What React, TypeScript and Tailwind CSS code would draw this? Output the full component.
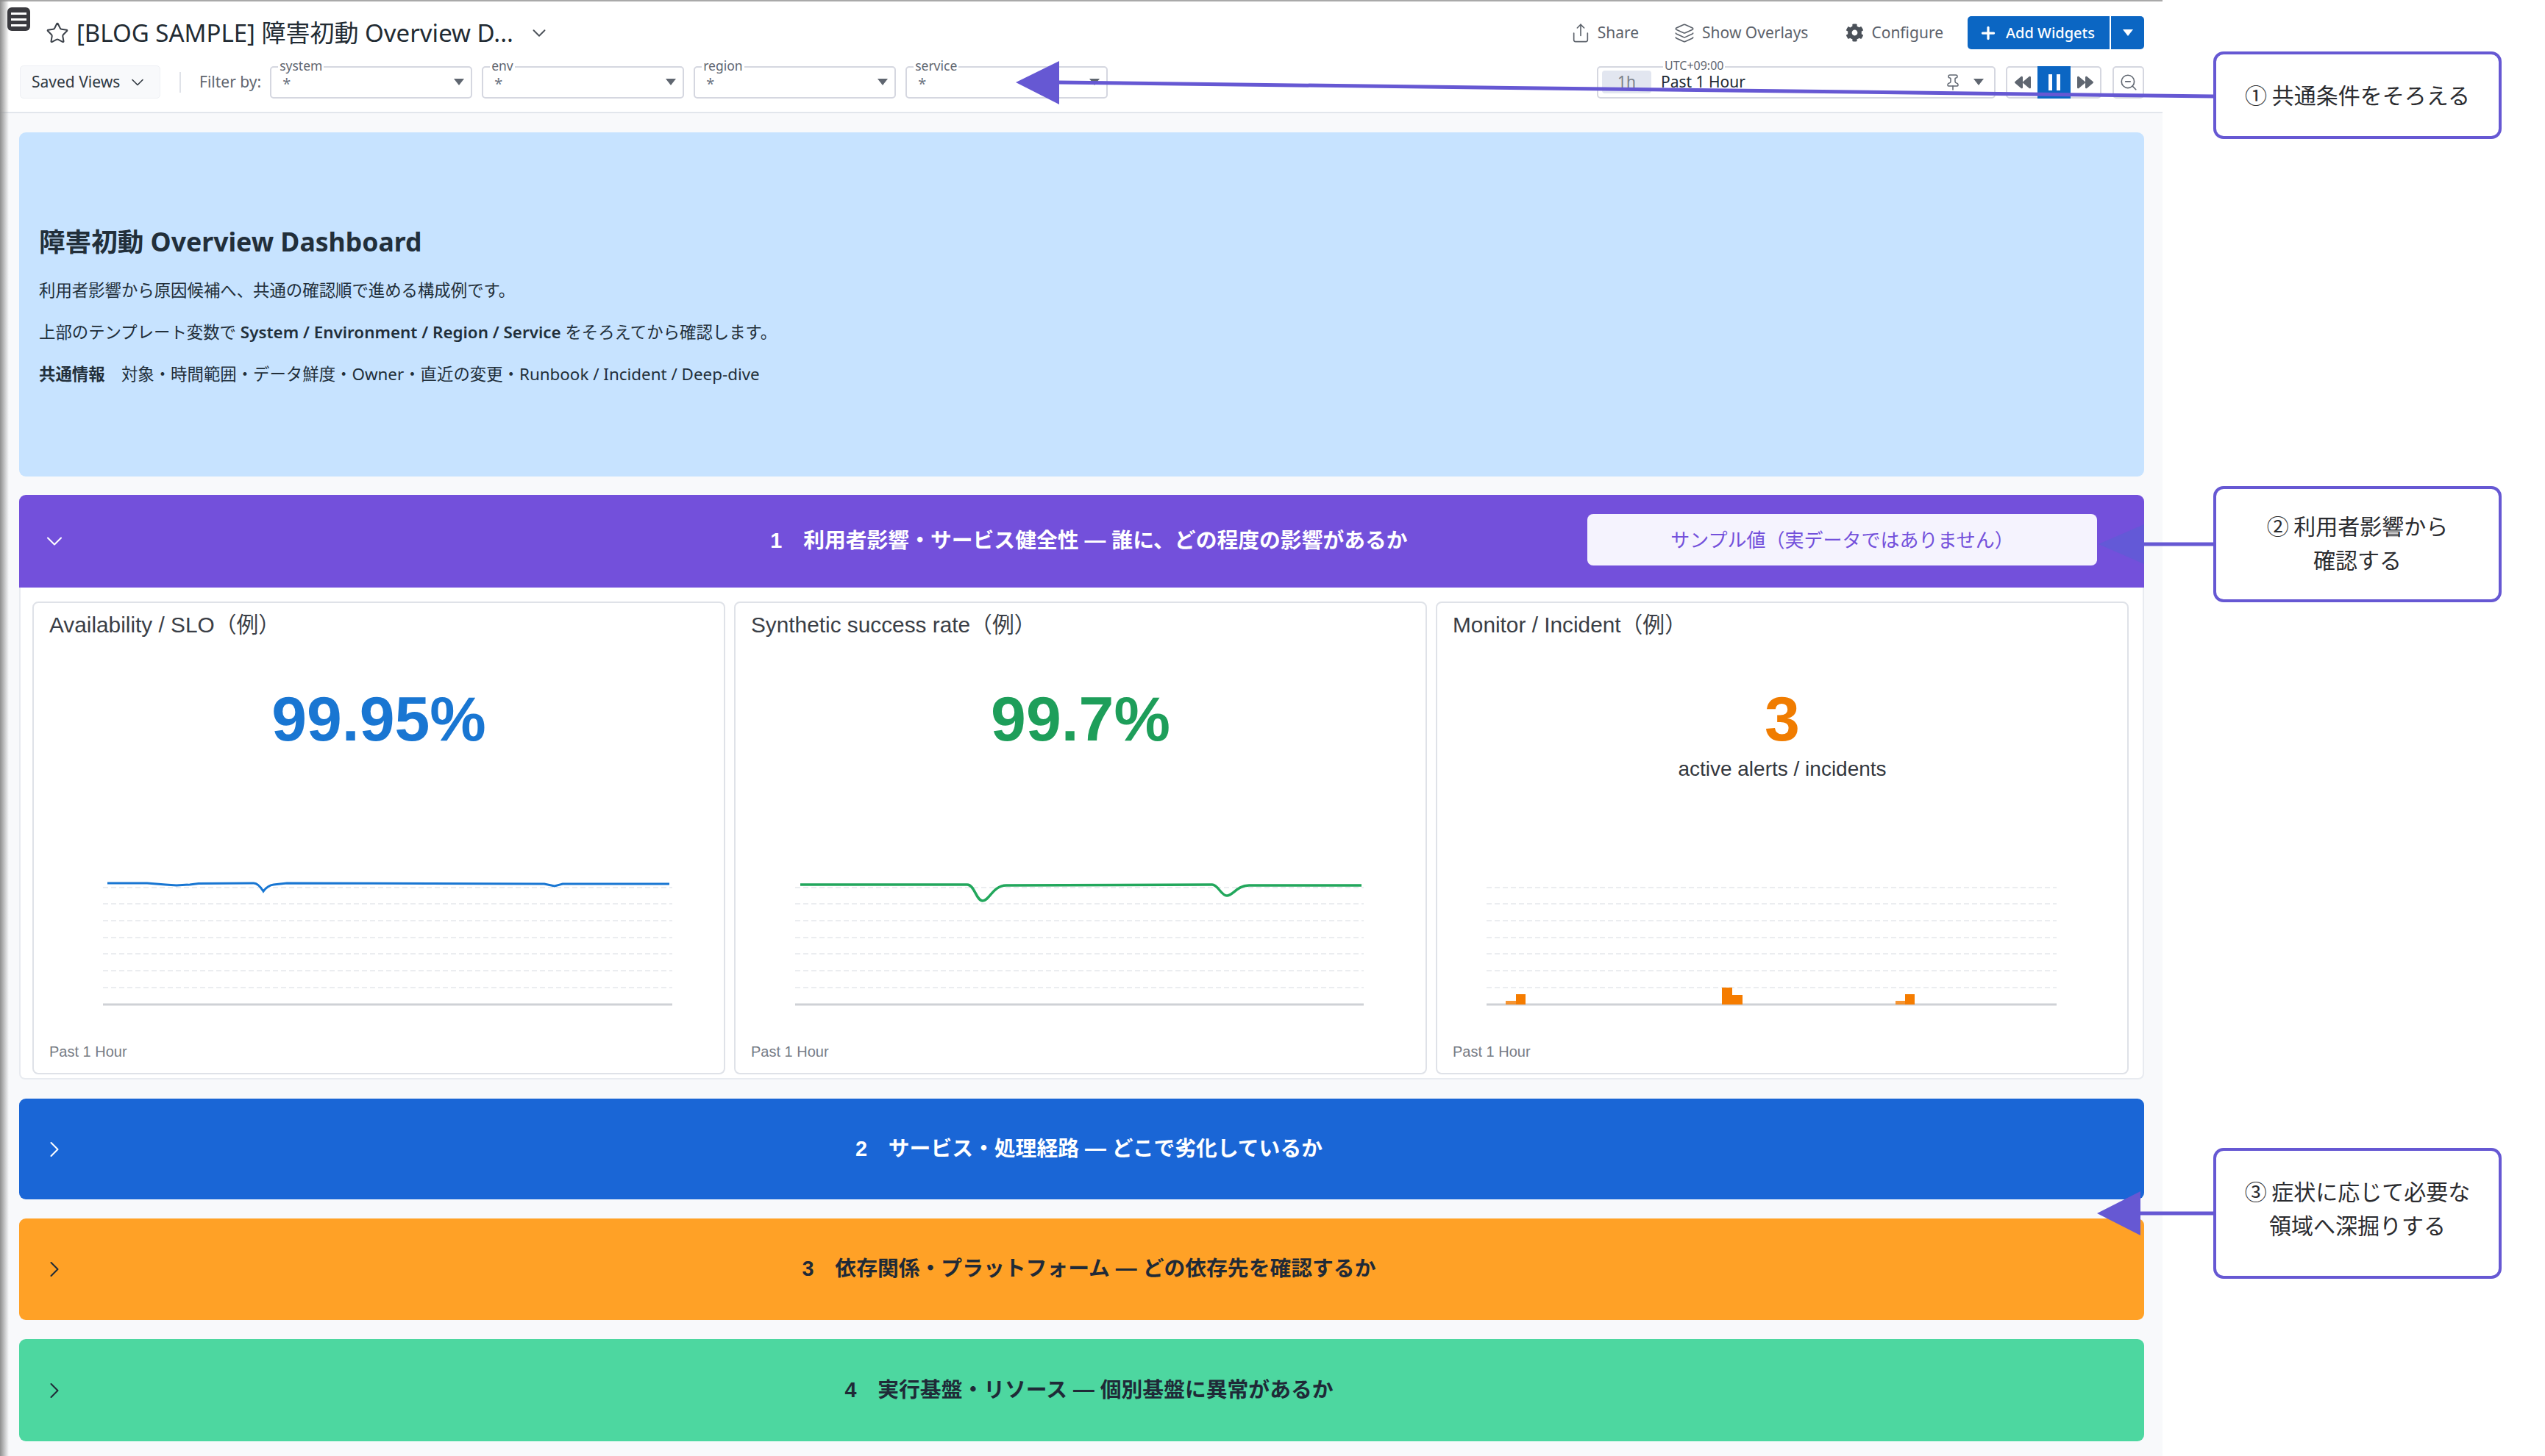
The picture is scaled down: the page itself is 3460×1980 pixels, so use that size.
import { ChevronDown, ChevronRight, Layers, Pin, Plus, Share, Star, ZoomOut } from "lucide-react";
import { FaBackward, FaCog, FaForward } from "react-icons/fa";

const GRID_Y = [39, 61, 84, 107, 129, 152, 175];

const uiFont = "font-['Noto_Sans','Noto_Sans_CJK_JP',sans-serif]";
const widgetFont = "font-['Liberation_Sans','Noto_Sans_CJK_JP',sans-serif]";

const Caret = ({ className }: { className: string }) => (
  <span className={`w-0 h-0 border-x-[7px] border-x-transparent border-t-[9px] ${className}`} />
);

const FilterField = ({ label }: { label: string }) => (
  <div className="relative w-[275px] h-[44px] border-2 border-[#d5d7e0] rounded-[5px] flex items-center justify-between pl-[15px] pr-[9px]">
    <span className="absolute left-[9px] top-[-12px] bg-white px-[2px] text-[17.5px] leading-[18px] text-[#5f6670]">{label}</span>
    <span className="text-[20px] text-[#6b7280] pt-[4px]">*</span>
    <Caret className="border-t-[#5f6670]" />
  </div>
);

const ChartGrid = ({ x1, x2 }: { x1: number; x2: number }) => (
  <>
    {GRID_Y.map((y) => (
      <line key={y} x1={x1} x2={x2} y1={y} y2={y} stroke="#ebedf0" strokeWidth="2" strokeDasharray="7 4" />
    ))}
    <line x1={x1} x2={x2} y1={198} y2={198} stroke="#cfd1d6" strokeWidth="3" />
  </>
);

const Chart = ({ children }: { children: React.ReactNode }) => (
  <svg viewBox="0 0 938 233" className="w-full h-[233px] mt-auto block">
    {children}
  </svg>
);

const Card = ({ title, children }: { title: string; children: React.ReactNode }) => (
  <div className={`w-[942px] h-[643px] bg-white border-2 border-[#dfe2e8] rounded-[8px] flex flex-col ${widgetFont}`}>
    <div className="h-[60px] flex items-center px-[21px] text-[29.8px] text-[#3a3e46]">{title}</div>
    {children}
    <div className="h-[58px] flex items-center px-[21px] text-[20px] text-[#777c85]">Past 1 Hour</div>
  </div>
);

const Value = ({ text, color }: { text: string; color: string }) => (
  <div className={`mt-[54px] text-center font-bold text-[86px] leading-[86px] ${color}`}>{text}</div>
);

const SectionBar = ({ height, color, text, label }: { height: string; color: string; text: string; label: string }) => (
  <div className={`${height} ${color} ${text} rounded-[9px] flex items-center pl-[30px]`}>
    <ChevronRight size={36} strokeWidth={1.4} className="shrink-0 mr-[-46px]" />
    <div className={`flex-1 text-center font-bold text-[28.8px] ${widgetFont}`}>{label}</div>
  </div>
);

const Callout = ({ height, margin, pad, lines }: { height: string; margin: string; pad: string; lines: string[] }) => (
  <div className={`${height} ${margin} ${pad} w-[392px] border-[4px] border-[#6658d3] rounded-[14px] bg-white flex flex-col items-center justify-center text-[30px] leading-[46px] text-[#2b2c30] font-['Noto_Sans_CJK_JP',sans-serif]`}>
    {lines.map((line) => (
      <div key={line}>{line}</div>
    ))}
  </div>
);

export default function App() {
  return (
    <div className={`relative w-[3460px] h-[1980px] overflow-hidden bg-white flex ${uiFont}`}>
      <main className="w-[2940px] h-full bg-[#f8f9fb] flex flex-col border-t-2 border-t-[#a9a9a9]">
        <header className="h-[152px] shrink-0 bg-white border-b-2 border-b-[#e2e6ec]">
          <div className="h-[45px] mt-[20px] flex items-center pl-[62px] pr-[25px]">
            <Star size={32} strokeWidth={1.5} className="text-[#3b4149]" />
            <span className="ml-[10px] text-[33px] text-[#222b33]">[BLOG SAMPLE] 障害初動 Overview D...</span>
            <ChevronDown size={30} strokeWidth={1.5} className="ml-[20px] text-[#4b5159]" />
            <div className="ml-auto flex items-center text-[21px] text-[#5c626b]">
              <Share size={28} strokeWidth={1.4} />
              <span className="ml-[9px]">Share</span>
              <Layers size={28} strokeWidth={1.4} className="ml-[48px]" />
              <span className="ml-[10px]">Show Overlays</span>
              <FaCog size={25} className="ml-[51px] text-[#4b5159]" />
              <span className="ml-[10px]">Configure</span>
              <div className="ml-[33px] w-[240px] h-[45px] bg-[#0b66c3] rounded-[5px] flex items-center text-white font-medium text-[20px]">
                <div className="w-[195px] h-full flex items-center pl-[15px] border-r-2 border-r-white">
                  <Plus size={26} strokeWidth={3} />
                  <span className="ml-[11px]">Add Widgets</span>
                </div>
                <div className="flex-1 flex justify-center">
                  <Caret className="border-t-white" />
                </div>
              </div>
            </div>
          </div>
          <div className="h-[45px] mt-[22px] flex items-center pl-[27px] pr-[25px]">
            <div className="w-[191px] h-[45px] bg-[#f8f9fb] border border-[#eef0f4] rounded-[5px] flex items-center pl-[15px] text-[21px] text-[#303841]">
              Saved Views
              <ChevronDown size={28} strokeWidth={1.4} className="ml-[10px]" />
            </div>
            <div className="w-[2px] h-[28px] bg-[#dfe2e8] ml-[26px]" />
            <span className="ml-[25px] mr-[12px] text-[21px] text-[#5f6670]">Filter by:</span>
            <div className="flex gap-[13px]">
              <FilterField label="system" />
              <FilterField label="env" />
              <FilterField label="region" />
              <FilterField label="service" />
            </div>
            <div className="ml-auto flex items-center">
              <div className="relative w-[542px] h-[44px] border-2 border-[#d5d7e0] rounded-[5px] flex items-center pl-[5px] pr-[14px]">
                <span className="absolute left-[88px] top-[-12px] bg-white px-[2px] text-[16px] leading-[18px] text-[#5f6670]">UTC+09:00</span>
                <span className="w-[67px] h-[31px] bg-[#e2e6f0] rounded-[4px] flex items-center justify-center text-[21px] text-[#7a808a]">1h</span>
                <span className="ml-[13px] text-[21px] text-[#222b33]">Past 1 Hour</span>
                <Pin size={24} strokeWidth={1.5} className="ml-auto text-[#5f6670]" />
                <Caret className="ml-[16px] border-t-[#5f6670]" />
              </div>
              <div className="ml-[14px] w-[130px] h-[44px] border-2 border-[#d5d7e0] rounded-[5px] flex items-center text-[#5f6670]">
                <div className="w-[41px] flex justify-center"><FaBackward size={22} /></div>
                <div className="w-[45px] h-[44px] bg-[#0b66c3] flex items-center justify-center gap-[6px]">
                  <span className="w-[5px] h-[22px] bg-white" />
                  <span className="w-[5px] h-[22px] bg-white" />
                </div>
                <div className="flex-1 flex justify-center"><FaForward size={22} /></div>
              </div>
              <div className="ml-[15px] w-[43px] h-[44px] border-2 border-[#d5d7e0] rounded-[5px] flex items-center justify-center text-[#5f6670]">
                <ZoomOut size={26} strokeWidth={1.5} />
              </div>
            </div>
          </div>
        </header>

        <div className="flex-1 flex flex-col pl-[26px] pr-[25px] pt-[26px]">
          <section className="h-[468px] shrink-0 bg-[#c7e3ff] rounded-[9px] px-[27px] pt-[123px] text-[#222f3a]">
            <h1 className="text-[35.6px] leading-[50px] font-bold">障害初動 Overview Dashboard</h1>
            <div className="mt-[13px] text-[22.4px] leading-[57px]">
              <p>利用者影響から原因候補へ、共通の確認順で進める構成例です。</p>
              <p>上部のテンプレート変数で <b className="font-semibold">System / Environment / Region / Service</b> をそろえてから確認します。</p>
              <p><b className="font-semibold">共通情報</b>　対象・時間範囲・データ鮮度・Owner・直近の変更・Runbook / Incident / Deep-dive</p>
            </div>
          </section>

          <section className="mt-[25px] shrink-0">
            <div className="relative h-[126px] bg-[#7350db] rounded-t-[9px] flex items-center pl-[30px] text-white">
              <ChevronDown size={36} strokeWidth={1.4} className="shrink-0 mr-[-46px]" />
              <div className={`flex-1 text-center font-bold text-[28.8px] ${widgetFont}`}>1　利用者影響・サービス健全性 — 誰に、どの程度の影響があるか</div>
              <div className="absolute right-[64px] top-[26px] w-[693px] h-[70px] pb-[4px] bg-[#f5f3fe] rounded-[8px] flex items-center justify-center text-[26px] text-[#7350db] font-['Noto_Sans_CJK_JP',sans-serif]">
                サンプル値（実データではありません）
              </div>
            </div>
            <div className="h-[669px] bg-white border-x-2 border-b-2 border-[#e8ebf0] rounded-b-[8px] flex gap-[12px] pl-[16px] pt-[19px]">
              <Card title="Availability / SLO（例）">
                <Value text="99.95%" color="text-[#1976d2]" />
                <Chart>
                  <ChartGrid x1={94} x2={868} />
                  <path
                    d="M100 33 L154 33 L179 35 L194 36 L212 35 L224 33.5 L299 33 Q305 33 312 44 Q318 36 326 35 L344 33 L694 34 L708 37 L719 34 L864 34"
                    fill="none"
                    stroke="#1876d2"
                    strokeWidth="3"
                  />
                </Chart>
              </Card>
              <Card title="Synthetic success rate（例）">
                <Value text="99.7%" color="text-[#1e9e5a]" />
                <Chart>
                  <ChartGrid x1={81} x2={854} />
                  <path
                    d="M88 35 L315 35 C325 35 327 57 336 57 C345 57 350 36 368 36 L648 35 C656 35 660 50 668 50 C676 50 682 36 698 36 L851 36"
                    fill="none"
                    stroke="#22a75c"
                    strokeWidth="3.5"
                  />
                </Chart>
              </Card>
              <Card title="Monitor / Incident（例）">
                <Value text="3" color="text-[#f07c00]" />
                <div className="text-center text-[28px] leading-[36px] mt-[8px] text-[#33373e]">active alerts / incidents</div>
                <Chart>
                  <ChartGrid x1={67} x2={842} />
                  <g fill="#f57c00">
                    <rect x="93" y="193" width="14" height="5" opacity="0.8" />
                    <rect x="107" y="184" width="13" height="14" />
                    <rect x="387" y="175" width="14" height="23" />
                    <rect x="401" y="185" width="14" height="13" />
                    <rect x="623" y="193" width="13" height="5" opacity="0.8" />
                    <rect x="636" y="184" width="13" height="14" />
                  </g>
                </Chart>
              </Card>
            </div>
          </section>

          <div className="mt-[26px] flex flex-col gap-[26px]">
            <SectionBar height="h-[137px]" color="bg-[#1a66d6]" text="text-white" label="2　サービス・処理経路 — どこで劣化しているか" />
            <SectionBar height="h-[138px]" color="bg-[#ffa126]" text="text-[#1f2a37]" label="3　依存関係・プラットフォーム — どの依存先を確認するか" />
            <SectionBar height="h-[139px]" color="bg-[#4dd7a0]" text="text-[#1f2a37]" label="4　実行基盤・リソース — 個別基盤に異常があるか" />
          </div>
        </div>
      </main>

      <aside className="flex-1 pl-[69px] flex flex-col">
        <Callout height="h-[119px]" margin="mt-[70px]" pad="pb-[3px]" lines={["① 共通条件をそろえる"]} />
        <Callout height="h-[158px]" margin="mt-[472px]" pad="pb-[6px]" lines={["② 利用者影響から", "確認する"]} />
        <Callout height="h-[178px]" margin="mt-[742px]" pad="pb-[16px]" lines={["③ 症状に応じて必要な", "領域へ深掘りする"]} />
      </aside>

      {/* left edge shadow and menu button sit over the page */}
      <div className="absolute left-0 top-0 w-[12px] h-full bg-gradient-to-r from-[#8f8f8f] to-transparent" />
      <div className="absolute left-[10px] top-[10px] w-[31px] h-[32px] bg-[#3a3a3f] rounded-[6px] flex flex-col items-center justify-center gap-[5px]">
        <span className="w-[21px] h-[3px] bg-white" />
        <span className="w-[21px] h-[3px] bg-white" />
        <span className="w-[21px] h-[3px] bg-white" />
      </div>

      {/* annotation arrows */}
      <svg viewBox="0 0 3460 1980" className="absolute inset-0 w-[3460px] h-[1980px] pointer-events-none">
        <line x1="1438" y1="112" x2="3009" y2="131" stroke="#6658d3" strokeWidth="5" />
        <polygon points="1381,112 1440,83 1440,142" fill="#6658d3" />
        <line x1="2915" y1="740" x2="3009" y2="740" stroke="#6658d3" strokeWidth="5" />
        <polygon points="2853,740 2915,713 2915,767" fill="#5f5bd6" opacity="0.8" />
        <line x1="2908" y1="1650" x2="3009" y2="1650" stroke="#6658d3" strokeWidth="5" />
        <polygon points="2851,1650 2910,1620 2910,1680" fill="#6658d3" />
      </svg>
    </div>
  );
}
